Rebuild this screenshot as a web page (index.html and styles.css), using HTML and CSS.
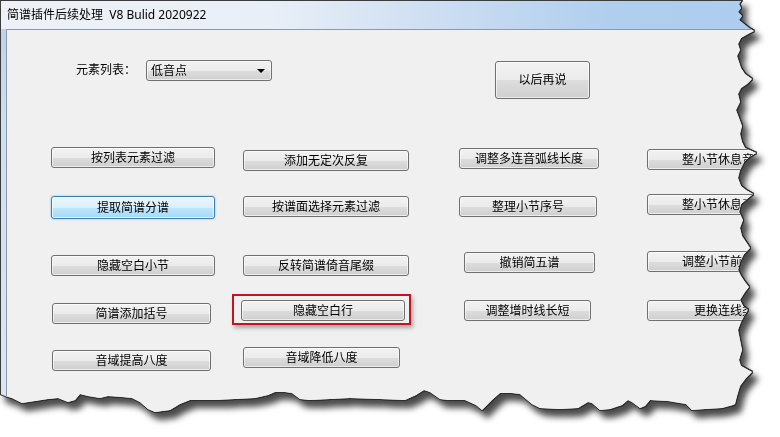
FILE: index.html
```html
<!DOCTYPE html>
<html lang="zh-CN">
<head>
    <meta charset="UTF-8">
    <title>简谱插件后续处理</title>
    <link rel="stylesheet" href="styles.css">
</head>
<body>
    <div class="shot">
        <div class="window">
            <div class="titlebar">简谱插件后续处理&nbsp;&nbsp;V8 Bulid 2020922</div>
            <div class="client">
                <div class="toprow">
                    <span class="field-label">元素列表：</span>
                    <div class="combo">
                        <span>低音点</span>
                        <span class="combo-arrow"></span>
                    </div>
                    <button class="btn btn-later">以后再说</button>
                </div>

                <div class="actions">
                    <!-- row 1 -->
                    <button class="btn col1 up1">按列表元素过滤</button>
                    <button class="btn col2 down2">添加无定次反复</button>
                    <button class="btn col3">调整多连音弧线长度</button>
                    <button class="btn col4 down1">整小节休息音居中</button>
                    <!-- row 2 -->
                    <button class="btn col1 focused">提取简谱分谱</button>
                    <button class="btn col2">按谱面选择元素过滤</button>
                    <button class="btn col3 w138">整理小节序号</button>
                    <button class="btn col4 up2">整小节休息系统化</button>
                    <!-- row 3 -->
                    <button class="btn col1">隐藏空白小节</button>
                    <button class="btn col2">反转简谱倚音尾缀</button>
                    <button class="btn col3 indent up3">撤销简五谱</button>
                    <button class="btn col4 up4">调整小节前置谱号</button>
                    <!-- row 4 -->
                    <button class="btn col1 short down3">简谱添加括号</button>
                    <button class="btn col2 marked">隐藏空白行</button>
                    <button class="btn col3 indent w127">调整增时线长短</button>
                    <button class="btn col4">更换连线类型</button>
                    <!-- row 5 -->
                    <button class="btn col1 short down2">音域提高八度</button>
                    <button class="btn col2 w157 up1">音域降低八度</button>
                </div>
            </div>
        </div>
    </div>
</body>
</html>
```

FILE: styles.css
```css
:root {
    --frame-dark: #3c3c3c;
    --client-bg: #f0f0f0;
    --btn-border: #707070;
    --ui-font: "Noto Sans", "Noto Sans CJK SC", sans-serif;
}
body {
    margin: 0;
    padding: 0;
    width: 780px;
    height: 437px;
    overflow: hidden;
    background: #fff;
    font-family: var(--ui-font);
    font-size: 12px;
    color: #000;
}

/* torn paper look: outline + soft shadow around the clipped window */
.shot {
    width: 780px;
    height: 437px;
    filter: drop-shadow(1px 0 0 #2e2e2e) drop-shadow(0 1px 0 #2e2e2e) drop-shadow(0 -1px 0 #2e2e2e) drop-shadow(5px 7px 3px rgba(0, 0, 0, 0.7));
}
.window {
    width: 765px;
    height: 420px;
    box-sizing: border-box;
    border-top: 1px solid var(--frame-dark);
    border-left: 1px solid var(--frame-dark);
    background: linear-gradient(#b9cfe9, #cddff2 30%, #dbe7f5 100%);
    display: flex;
    flex-direction: column;
    clip-path: polygon(0 0, 742px 0, 739px 4px, 741px 8px, 738px 12px, 742px 16px, 739px 20px, 744px 24px, 749px 28px, 754px 31px, 748px 34px, 741px 38px, 738px 44px, 740px 50px, 737px 56px, 739px 62px, 741px 68px, 745px 74px, 752px 79px, 747px 84px, 741px 88px, 738px 94px, 740px 102px, 736px 110px, 739px 118px, 742px 126px, 740px 134px, 742px 142px, 745px 148px, 756px 153px, 749px 157px, 744px 162px, 740px 170px, 738px 178px, 741px 186px, 746px 190px, 753px 194px, 747px 199px, 741px 204px, 739px 212px, 743px 220px, 740px 228px, 742px 236px, 746px 242px, 750px 248px, 744px 254px, 740px 262px, 738px 270px, 741px 276px, 745px 282px, 749px 287px, 745px 292px, 740px 300px, 743px 306px, 748px 310px, 744px 316px, 741px 322px, 738px 330px, 740px 340px, 742px 350px, 739px 360px, 741px 366px, 752px 372px, 746px 378px, 740px 386px, 737px 396px, 735px 404px, 733px 405px, 722px 408px, 705px 409px, 692px 410px, 686px 404px, 680px 403px, 668px 401px, 650px 400px, 645px 406px, 640px 408px, 632px 402px, 628px 400px, 622px 405px, 610px 409px, 600px 410px, 592px 403px, 588px 402px, 578px 408px, 560px 409px, 540px 408px, 532px 404px, 520px 394px, 512px 393px, 500px 393px, 492px 400px, 482px 410px, 476px 405px, 465px 400px, 448px 400px, 440px 399px, 430px 392px, 424px 390px, 416px 395px, 405px 400px, 380px 399px, 350px 398px, 330px 399px, 310px 400px, 300px 399px, 292px 393px, 285px 392px, 275px 392px, 268px 395px, 255px 398px, 235px 399px, 215px 400px, 190px 400px, 180px 404px, 170px 410px, 155px 412px, 148px 409px, 140px 402px, 132px 398px, 122px 397px, 108px 396px, 100px 398px, 88px 396px, 80px 394px, 75px 400px, 68px 402px, 58px 398px, 48px 399px, 35px 401px, 22px 403px, 12px 398px, 5px 396px, 0 394px);
}
.titlebar {
    height: 28px;
    padding-left: 6px;
    line-height: 27px;
    white-space: nowrap;
    background: linear-gradient(90deg, #eef2f7 0%, #e9eff7 35%, #c9dcf1 60%, #b0ceee 80%, #aecdee 100%);
}
.client {
    flex: 1;
    margin-left: 5px;
    border-top: 1px solid #8d99a8;
    border-left: 1px solid #8d99a8;
    background: var(--client-bg);
    padding-top: 30px;
}

/* top row: element list + later button */
.toprow {
    display: flex;
    align-items: flex-start;
    padding-left: 69px;
    height: 39px;
}
.field-label {
    margin-top: 2px;
    width: 70px;
    line-height: 16px;
}
.combo {
    width: 126px;
    height: 21px;
    box-sizing: border-box;
    border: 1px solid var(--btn-border);
    border-radius: 3px;
    background: linear-gradient(#f2f2f2 0%, #ebebeb 50%, #dddddd 51%, #cfcfcf 100%);
    box-shadow: inset 0 0 0 1px rgba(255, 255, 255, 0.6);
    display: flex;
    align-items: center;
    justify-content: space-between;
    padding: 0 6px 0 4px;
    line-height: 18px;
}
.combo-arrow {
    width: 0;
    height: 0;
    border-left: 4px solid transparent;
    border-right: 4px solid transparent;
    border-top: 4px solid #000;
}
.btn-later {
    margin-left: 223px;
    margin-top: 1px;
    width: 95px;
    height: 38px !important;
}

/* command buttons */
.actions {
    margin-top: 49px;
    padding-left: 44px;
    display: grid;
    grid-template-columns: 192px 216px 188px auto;
    grid-template-rows: 48px 59px 45px 48px auto;
    align-items: start;
}
.btn {
    height: 21px;
    padding: 0;
    box-sizing: border-box;
    border: 1px solid var(--btn-border);
    border-radius: 3px;
    background: linear-gradient(#f2f2f2 0%, #ebebeb 50%, #dddddd 51%, #cfcfcf 100%);
    box-shadow: inset 0 0 0 1px rgba(255, 255, 255, 0.6);
    font-family: var(--ui-font);
    font-size: 12px;
    line-height: 18px;
    color: #000;
    text-align: center;
    white-space: nowrap;
    overflow: hidden;
}
.col1 { grid-column: 1; width: 164px; }
.col2 { grid-column: 2; width: 166px; }
.col3 { grid-column: 3; width: 140px; }
.col4 { grid-column: 4; width: 166px; }

.short { width: 159px; margin-left: 1px; }
.w138 { width: 138px; }
.w157 { width: 157px; }
.indent { margin-left: 5px; width: 131px; }
.w127 { width: 127px; }

.up1 { margin-top: -1px; }
.up2 { margin-top: -2px; }
.up3 { margin-top: -3px; }
.up4 { margin-top: -4px; }
.down1 { margin-top: 1px; }
.down2 { margin-top: 2px; }
.down3 { margin-top: 3px; }

.btn.focused {
    height: 23px;
    border-color: #3c7fb1;
    background: linear-gradient(#eaf6fd 0%, #d9f0fc 50%, #bee6fd 51%, #a7d9f5 100%);
    box-shadow: inset 0 0 0 1px rgba(255, 255, 255, 0.7), 0 0 2px #5fb6e8;
    line-height: 20px;
}

/* red annotation box */
.btn.marked {
    position: relative;
    margin-left: -2px;
    width: 164px;
    overflow: visible;
}
.btn.marked::after {
    content: "";
    position: absolute;
    top: -7px;
    bottom: -5px;
    left: -10px;
    right: -7px;
    border: 2px solid #c3141b;
    box-shadow: 2px 3px 4px rgba(0, 0, 0, 0.3);
}
```
